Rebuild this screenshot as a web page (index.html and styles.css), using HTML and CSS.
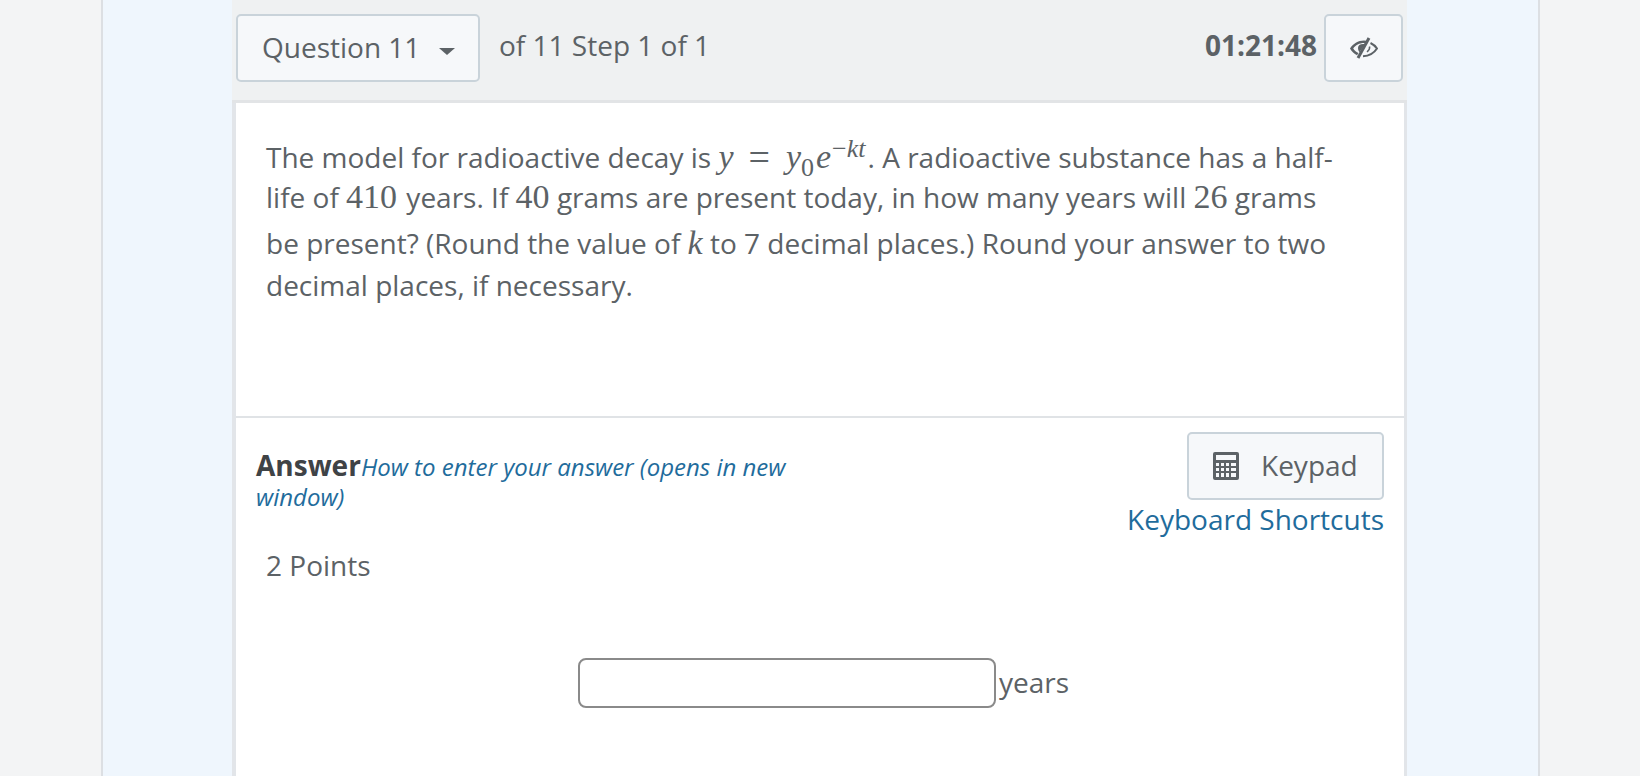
FILE: index.html
```html
<!DOCTYPE html>
<html lang="en">
<head>
  <meta charset="UTF-8" />
  <meta name="viewport" content="width=device-width, initial-scale=1.0"/>
  <title>Question 11</title>
  <link rel="stylesheet" href="styles.css">
</head>
<body>
  <div class="page">
    <div class="shell">
      <main class="main">
        <header class="topbar">
          <button class="btn question-btn">Question 11<span class="caret"></span></button>
          <span class="step">of 11 Step 1 of 1</span>
          <span class="timer">01:21:48</span>
          <button class="btn eye-btn" aria-label="Hide timer">
            <svg width="28" height="22" viewBox="0 0 28 22">
              <path d="M0 11.500C3 7 8 3.500 14 3.500c1.300 0 2.600.2 3.800.5L16.400 6.400C15.600 6.200 14.800 6.100 14 6.100 9.500 6.100 5.500 8.300 3.200 11.500 4.500 13.500 6.500 15 8.500 16L7 18.300C4.200 17 1.800 14.500 0 11.500z" fill="#5c6266"/>
              <path d="M8 11C8 8.500 10 7 13 7h2L9.500 15.300C8.500 14 8 12.500 8 11z" fill="#5c6266"/>
              <path d="M19 1L8 21" stroke="#5c6266" stroke-width="3" fill="none"/>
              <path d="M20.500 6c3 1.500 5.200 3.500 6.500 5.500-2.800 4.300-7.800 7.500-14 7.800" stroke="#5c6266" stroke-width="2" fill="none"/>
              <path d="M19.500 9.500c.5 2-.5 4-2.500 5.500" stroke="#5c6266" stroke-width="1.500" fill="none"/>
            </svg>
          </button>
        </header>
        <section class="card">
          <div class="question">
            <p>The model for radioactive decay is <span class="math"><i>y</i><span class="eq">=</span><i>y</i><sub>0</sub><i>e</i><sup>−<i>kt</i></sup></span>. A radioactive substance has a half-life of <span class="math math-wide">410</span> years. If <span class="math">40</span> grams are present today, in how many years will <span class="math">26</span> grams be present? (Round the value of <span class="math math-k"><i>k</i></span> to 7 decimal places.) Round your answer to two decimal places, if necessary.</p>
          </div>
          <div class="answer">
            <div class="answer-head">
              <div class="answer-title"><strong>Answer</strong><a href="#">How to enter your answer (opens in new window)</a></div>
              <div class="answer-tools">
                <button class="btn keypad-btn">
                  <svg width="26" height="28" viewBox="0 0 26 28">
                    <path fill="#5c6266" fill-rule="evenodd" d="M2 0h22a2 2 0 0 1 2 2v24a2 2 0 0 1-2 2H2a2 2 0 0 1-2-2V2a2 2 0 0 1 2-2zM3 3v5h20V3zM3 11v3h3v-3zM8 11v3h3v-3zM13 11v3h3v-3zM18 11v3h5v-3zM3 16v3h3v-3zM8 16v3h3v-3zM13 16v3h3v-3zM18 16v3h5v-3zM3 21v4h3v-4zM8 21v4h3v-4zM13 21v4h3v-4zM18 21v4h5v-4z"/>
                  </svg>
                  <span class="keypad-label">Keypad</span>
                </button>
                <a href="#" class="shortcuts">Keyboard Shortcuts</a>
              </div>
            </div>
            <div class="points">2 Points</div>
            <div class="field">
              <input type="text" class="answer-input">
              <span class="unit">years</span>
            </div>
          </div>
        </section>
      </main>
    </div>
  </div>
</body>
</html>
```

FILE: styles.css
```css
html, body {
  margin: 0;
  height: 776px;
  overflow: hidden;
}

body {
  background-color: #f3f4f5;
  font-family: 'Open Sans', sans-serif;
  font-size: 28px;
  color: #5c6266;
}

.page {
  width: 1439px;
  height: 776px;
  margin-left: 101px;
  box-sizing: border-box;
  border-left: 2px solid #dcdfe3;
  border-right: 2px solid #dcdfe3;
  background-color: #eff6fd;
}

.shell {
  padding: 0 131px 0 129px;
  height: 100%;
  box-sizing: border-box;
}

.main {
  height: 100%;
}

.topbar {
  height: 103px;
  padding: 14px 4px 0 4px;
  box-sizing: border-box;
  display: flex;
  align-items: flex-start;
  background-color: #eff1f2;
  border-bottom: 3px solid #e2e4e6;
}

.btn {
  font-family: inherit;
  font-size: 28px;
  color: #5c6266;
  background-color: #f6f8fa;
  border: 2px solid #c9d3da;
  border-radius: 5px;
}

.question-btn {
  width: 244px;
  height: 68px;
  padding: 0 0 2px 24px;
  display: flex;
  align-items: center;
}

.caret {
  width: 0;
  height: 0;
  margin-left: 19px;
  margin-top: 8px;
  border-left: 8px solid transparent;
  border-right: 8px solid transparent;
  border-top: 7px solid #5c6266;
}

.step {
  margin-left: 19px;
  line-height: 62px;
}

.timer {
  margin-left: auto;
  margin-right: 7px;
  font-weight: 700;
  line-height: 62px;
}

.eye-btn {
  width: 79px;
  height: 68px;
  padding: 0;
  display: flex;
  align-items: center;
  justify-content: center;
}

.card {
  height: 673px;
  background-color: #fff;
  border-left: 4px solid #e2e5e9;
  border-right: 3px solid #e2e5e9;
}

.question {
  height: 315px;
  padding: 34px 60px 0 30px;
  box-sizing: border-box;
  border-bottom: 2px solid #e0e3e6;
}

.question p {
  margin: 0;
  line-height: 40px;
}

.math {
  font-family: 'Liberation Serif', serif;
  font-size: 34px;
}

.math i {
  font-style: italic;
}

.math .eq {
  margin: 0 16px 0 15px;
  font-size: 38px;
  line-height: 0;
  vertical-align: -2px;
}

.math sub, .math sup {
  font-size: 26px;
  line-height: 0;
}

.math sub {
  margin-right: 2px;
}

.math sup {
  margin-right: 2px;
  margin-left: 1px;
  vertical-align: 11px;
}

.math-wide {
  margin-right: 2px;
}

.math-k {
  display: inline-block;
  padding: 6px 0 2px;
}

.answer {
  padding: 14px 20px 0 20px;
}

.answer-head {
  display: flex;
  justify-content: space-between;
  align-items: flex-start;
}

.answer-title {
  width: 560px;
  margin-top: 19px;
  line-height: 28px;
}

.answer-title strong {
  color: #3f4346;
}

.answer-title a {
  font-style: italic;
  font-size: 24px;
  color: #1f6c9c;
  text-decoration: none;
}

.answer-tools {
  display: flex;
  flex-direction: column;
  align-items: flex-end;
}

.keypad-btn {
  width: 197px;
  height: 68px;
  padding: 0 0 0 24px;
  display: flex;
  align-items: center;
  gap: 22px;
}

.keypad-label {
  margin-bottom: 2px;
}

.shortcuts {
  margin-top: -1px;
  color: #1f6c9c;
  text-decoration: none;
  line-height: 40px;
}

.points {
  margin: 6px 0 0 10px;
  line-height: 40px;
}

.field {
  display: flex;
  align-items: center;
  margin: 73px 0 0 322px;
}

.answer-input {
  width: 418px;
  height: 50px;
  box-sizing: border-box;
  border: 2px solid #8a8a8a;
  border-radius: 8px;
  background-color: #fff;
  margin-right: 3px;
}

.unit {
  margin-bottom: 2px;
}
```
